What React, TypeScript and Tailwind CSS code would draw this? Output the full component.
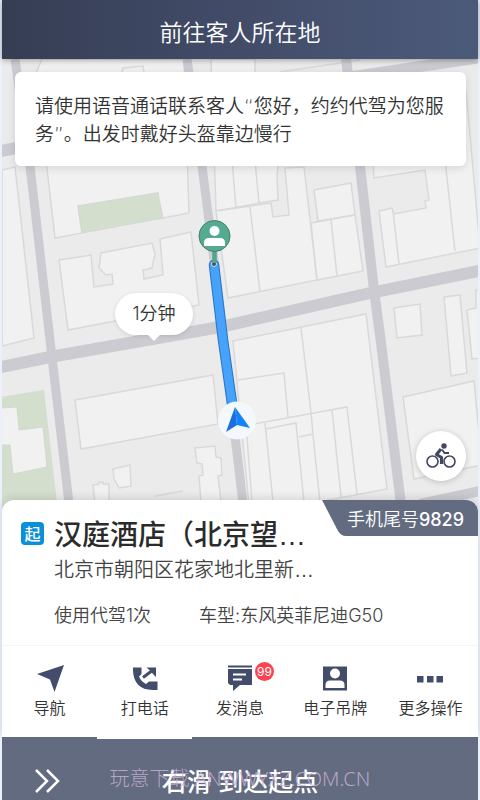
import React from "react";

const blocks = [
  "2,170 15,167 34,338 2,346",
  "42,59 184,59 189,213 158,219 158,193 78,206 82,233 55,238 46,160 33,80",
  "59,260 91,255 94,287 113,284 112,274 106,275 99,268 101,253 152,243 155,254 152,268 143,270 144,279 163,275 160,239 191,232 199,305 68,330",
  "211,59 255,59 255,160 260,203 216,211",
  "255,160 279,160 277,175 278,200 259,203",
  "216,211 271,203 273,217 289,215 285,168 304,167 317,280 228,298",
  "314,190 351,183 355,215 318,221",
  "311,223 355,215 363,271 317,280",
  "373,160 374,178 425,170 429,200 425,201 426,208 394,214 392,208 379,211 386,267 480,248 466,90 372,100",
  "394,308 420,304 422,335 397,338",
  "444,297 460,295 467,373 451,376",
  "480,290 476,290 476,308 467,310 472,359 480,358",
  "233,341 366,314 387,489 250,515",
  "75,400 213,375 218,424 81,449",
  "113,469 130,465 131,486 119,488 114,479",
  "93,485 99,484 99,482 103,482 103,484 109,484 109,502 95,502",
  "195,448 215,446 216,457 221,458 222,475 218,476 221,502 201,502 199,476 203,475 202,464 197,463",
  "403,397 474,381 482,465 414,479",
];

const lines = [
  "232,160 236,208",
  "250,207 260,292",
  "331,220 337,276",
  "393,211 399,264",
  "445,160 455,251",
  "301,328 311,412 313,435 320,502",
  "238,380 284,373 288,417",
  "243,426 347,407 357,494",
  "265,423 273,502",
  "266,429 296,423 304,502",
  "299,437 313,434",
  "332,410 341,497",
  "246,425 252,502",
  "155,496 183,491",
  "122,72 123,68 143,66 144,72",
  "280,72 360,60",
];

const roads = [
  { d: "M15 59 30 166 50 340 70 512", w: 9 },
  { d: "M187 59 202 166 214 260 244 512", w: 9 },
  { d: "M346 59 360 166 374 290 380 335 402 512", w: 10 },
  { d: "M-4 368 50 357 220 327 370 293 484 270", w: 12 },
  { d: "M-4 152 16 148", w: 12 },
  { d: "M420 504 484 490", w: 10 },
  { d: "M350 77 484 57", w: 11 },
];

function StreetMap() {
  return (
    <svg
      className="absolute inset-0 h-full w-full"
      viewBox="2 59 476 453"
      preserveAspectRatio="xMidYMid slice"
      aria-hidden="true"
    >
      <rect x="-400" y="-400" width="1300" height="1400" fill="#ebebeb" />
      <g fill="#f1f1f1" stroke="#d9d9db" strokeWidth="1.5">
        {blocks.map((p) => (
          <polygon key={p} points={p} />
        ))}
      </g>
      <g fill="none" stroke="#d9d9db" strokeWidth="1.5">
        {lines.map((p) => (
          <polyline key={p} points={p} />
        ))}
      </g>
      <polygon points="78,206 158,193 163,218 82,233" fill="#d3decd" stroke="#d5d8d3" />
      <polygon points="0,397 44,390 58,512 0,512" fill="#d3decd" />
      <polygon points="0,408 17,407 19,430 43,427 47,467 13,474 10,445 0,445" fill="#f1f1f1" stroke="#d5d8d3" />
      <g fill="none" stroke="#cccbd2">
        {roads.map((r) => (
          <path key={r.d} d={r.d} strokeWidth={r.w} />
        ))}
      </g>
      <path d="M214 265 223 340 233 410" fill="none" stroke="#2a74c4" strokeWidth="10.500" strokeLinecap="round" strokeLinejoin="round" />
      <path d="M214 265 223 340 233 410" fill="none" stroke="#46a2fb" strokeWidth="8.500" strokeLinecap="round" strokeLinejoin="round" />
      <circle cx="214" cy="264" r="2.500" fill="#40505c" stroke="#cfe0ee" />
      <path d="M214.500 250V263" stroke="#4fa78b" strokeWidth="4.500" />
      <circle cx="214.500" cy="236" r="15.500" fill="#55ab90" stroke="#4c7a70" />
      <circle cx="214.500" cy="231" r="5" fill="#fff" />
      <path d="M204 246v-3q0-5 5-5h11q5 0 5 5v3z" fill="#fff" />
      <circle cx="237" cy="420.500" r="19" fill="#f2f8fc" />
      <path d="M235 407 226 432 237 425z" fill="#1b6ee0" />
      <path d="M235 407 250 428 237 425z" fill="#1183ff" />
    </svg>
  );
}

function NavIcon() {
  return (
    <svg width="28" height="28" viewBox="0 0 28 28" aria-hidden="true">
      <path d="M1 10 28 1 18.500 28 14 15.500z" fill="#434c6b" />
    </svg>
  );
}

function PhoneIcon() {
  return (
    <svg width="28" height="28" viewBox="0 0 28 28" aria-hidden="true">
      <path d="M2 3.500h8.500v6.500l-2.500 2.500q2 5 7 7.500l3-2.500h8.500v8.500h-5Q3 25.500 2 7z" fill="#434c6b" />
      <path d="M12 13.500 22 6" stroke="#434c6b" strokeWidth="3" />
      <path d="M15.500 3.500H25v9.500l-3-3-3-3.500z" fill="#434c6b" />
    </svg>
  );
}

function MessageIcon() {
  return (
    <svg width="28" height="28" viewBox="0 0 28 28" aria-hidden="true">
      <path d="M2 1.500h24v2H2zM2 5h24v16H14l-7 6v-6H4l-2-2z" fill="#434c6b" />
      <path d="M7 10.500h13M7 15.500h9" stroke="#fff" strokeWidth="2" />
    </svg>
  );
}

function IdCardIcon() {
  return (
    <svg width="28" height="28" viewBox="0 0 28 28" aria-hidden="true">
      <path d="M2 2.500h24v24H2z" fill="#434c6b" />
      <circle cx="14" cy="9.500" r="5" fill="#fff" />
      <path d="M4.500 24v-3q0-4.500 4.500-4.500h10q4.500 0 4.500 4.500v3z" fill="#fff" />
    </svg>
  );
}

function MoreIcon() {
  return (
    <svg width="28" height="28" viewBox="0 0 28 28" aria-hidden="true">
      <path d="M1 12h6.500v6.500H1zM11 12h6.500v6.500H11zM20.500 12H27v6.500h-6.500z" fill="#434c6b" />
    </svg>
  );
}

function BikeIcon() {
  return (
    <svg width="30" height="26" viewBox="0 0 30 26" aria-hidden="true">
      <g fill="none" stroke="#434660">
        <circle cx="6.500" cy="18.500" r="5.500" strokeWidth="1.600" />
        <circle cx="23.500" cy="18.500" r="5.500" strokeWidth="1.600" />
        <path d="M15 6 10.500 11.500l5 3V21" strokeWidth="3.200" strokeLinejoin="round" />
        <path d="M16 6.500 18.500 10H23" strokeWidth="1.800" />
      </g>
      <circle cx="18" cy="3" r="2.700" fill="#434660" />
    </svg>
  );
}

const actions = [
  { label: "导航", Icon: NavIcon },
  { label: "打电话", Icon: PhoneIcon },
  { label: "发消息", Icon: MessageIcon, count: 99 },
  { label: "电子吊牌", Icon: IdCardIcon },
  { label: "更多操作", Icon: MoreIcon },
];

export default function App() {
  return (
    <div className="flex min-h-screen flex-col bg-[#eaf1fd] px-0.5 font-['Inter','Noto_Sans_CJK_SC',sans-serif] font-[350] text-[#333]">
      <header className="relative z-10 flex h-[59px] items-center justify-center bg-linear-to-r from-[#363e54] via-[#424c69] to-[#4c5a7a] pt-1.5 shadow-[0_1px_6px_rgba(0,0,0,0.35)]">
        <h1 className="text-[23px] leading-8 font-[350] text-white">前往客人所在地</h1>
      </header>

      <main className="relative flex-1 overflow-hidden px-3 pt-[13px]">
        <StreetMap />
        <p className="relative ml-px rounded-md bg-white px-5 pt-5 pb-[18px] font-['DejaVu_Sans','Noto_Sans_CJK_SC',sans-serif] text-[19px] leading-7 shadow-[0_2px_8px_rgba(0,0,0,0.12)]">
          请使用语音通话联系客人“您好，约约代驾为您服务”。出发时戴好头盔靠边慢行
        </p>
        <div className="absolute top-[234px] left-[113px] flex h-[42px] w-[78px] items-center justify-center rounded-full bg-white text-lg shadow-[0_1px_4px_rgba(0,0,0,0.12)]">
          1分钟
          <svg className="absolute top-full" width="12" height="6" viewBox="0 0 12 6" aria-hidden="true">
            <path d="M0 0h12L6 6z" fill="#fff" />
          </svg>
        </div>
        <button
          type="button"
          aria-label="骑行"
          className="absolute right-3 bottom-[31px] flex size-[50px] items-center justify-center rounded-full bg-white shadow-[0_1px_6px_rgba(0,0,0,0.2)]"
        >
          <BikeIcon />
        </button>
      </main>

      <section className="relative -mt-3 rounded-t-xl bg-white shadow-[0_-2px_8px_rgba(0,0,0,0.12)]">
        <div className="absolute top-0 right-0 h-9 w-[156px] overflow-hidden rounded-tr-xl">
          <svg className="absolute inset-0" width="156" height="36" viewBox="0 0 156 36" aria-hidden="true">
            <path d="M0 0h156v36H24q-5 0-8-5z" fill="#636b81" />
          </svg>
          <p className="relative pt-0.5 pr-3.5 text-right text-lg leading-9 text-white">
            手机尾号<span className="font-medium">9829</span>
          </p>
        </div>
        <div className="flex gap-2.5 pt-[18px] pl-[19px]">
          <span className="mt-1 flex size-[23px] items-center justify-center rounded bg-[#0b8fdb] text-base leading-none font-medium text-white">
            起
          </span>
          <div className="font-['Liberation_Sans','Noto_Sans_CJK_SC',sans-serif]">
            <h2 className="text-[28px] leading-9 font-medium text-[#2b2b2b]">汉庭酒店（北京望…</h2>
            <p className="text-xl leading-8 text-[#444]">北京市朝阳区花家地北里新…</p>
            <p className="flex gap-12 pt-4 font-['Inter','Noto_Sans_CJK_SC',sans-serif] text-lg leading-7 text-[#444]">
              <span>使用代驾1次</span>
              <span>车型:东风英菲尼迪G50</span>
            </p>
          </div>
        </div>
        <nav className="mt-[15px] grid grid-cols-5 border-t border-[#f6f6f8]">
          {actions.map(({ label, Icon, count }) => (
            <button key={label} type="button" className="flex h-[91px] flex-col items-center pt-[18px]">
              <span className="relative">
                <Icon />
                {count && (
                  <span className="absolute -top-0.5 left-[29px] flex size-[19px] items-center justify-center rounded-full bg-[#fb4354] text-xs font-normal text-white">
                    {count}
                  </span>
                )}
              </span>
              <span className="mt-1 text-base leading-6">{label}</span>
            </button>
          ))}
        </nav>
      </section>

      <footer className="relative">
        <button type="button" className="relative flex h-[63px] w-full items-center justify-center bg-[#636b81] pt-7 text-[25px] font-medium text-white">
          <svg className="absolute top-8 left-8" width="26" height="24" viewBox="0 0 26 24" fill="none" stroke="#fff" strokeWidth="2.500" aria-hidden="true">
            <path d="M2 1 13 12 2 23M13 1 24 12 13 23" />
          </svg>
          右滑 到达起点
        </button>
        <div className="absolute top-0 left-1/5 h-0.5 w-1/5 bg-white" />
        <p className="pointer-events-none absolute inset-x-0 top-7 text-center font-['Noto_Sans','Noto_Sans_CJK_SC',sans-serif] text-xl leading-7 font-light text-[#c8b2d6]/85">
          玩意下载 ANWWYXZ.COM.CN
        </p>
      </footer>
    </div>
  );
}
